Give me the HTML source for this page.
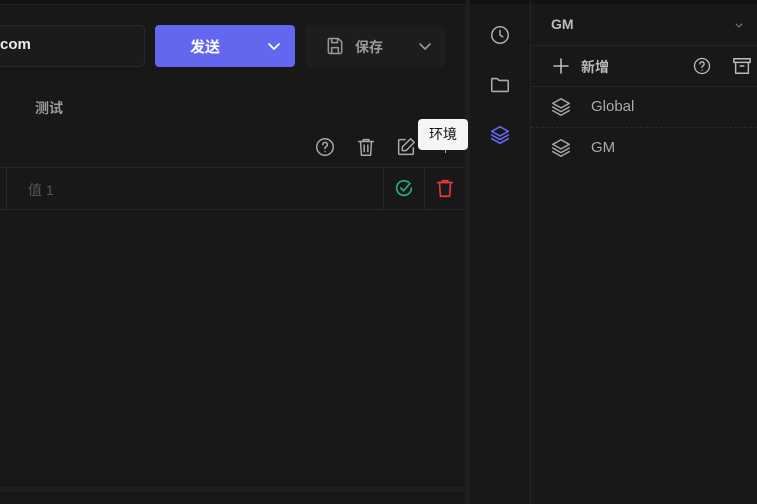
<!DOCTYPE html>
<html><head><meta charset="utf-8"><style>
*{margin:0;padding:0;box-sizing:border-box}
body{width:757px;height:504px;background:#181818;font-family:"Liberation Sans","Noto Sans CJK SC",sans-serif;position:relative;overflow:hidden;color:#ccc}
.a{position:absolute}
svg{position:absolute;fill:none;stroke-linecap:round;stroke-linejoin:round}
</style></head><body>
<div class="a" style="left:0;top:0;width:757px;height:4px;background:#121212"></div>
<div class="a" style="left:0;top:4px;width:465px;height:1px;background:#222"></div>
<!-- divider -->
<div class="a" style="left:465px;top:0;width:5px;height:504px;background:#1e1e1e"></div>
<div class="a" style="left:0;top:487px;width:465px;height:5px;background:#1e1e1e"></div>
<div class="a" style="left:530px;top:0;width:1px;height:504px;background:#262626"></div>
<!-- url input -->
<div class="a" style="left:-10px;top:25px;width:155px;height:42px;border:1px solid #2a2a2a;border-radius:5px;background:#1b1b1b"></div>
<div class="a" style="left:0;top:36px;font-size:15px;font-weight:bold;color:#eee">com</div>
<!-- send -->
<div class="a" style="left:155px;top:25px;width:140px;height:42px;border-radius:4px;background:#6366ee"></div>
<div class="a" style="left:190px;top:36px;font-size:15px;font-weight:bold;color:#fff">发送</div>
<svg style="left:266px;top:38px" width="16" height="16" viewBox="0 0 16 16" stroke="#fff" stroke-width="1.8"><path d="M3 6l5 5 5-5"/></svg>
<!-- save -->
<div class="a" style="left:305px;top:25px;width:140px;height:42px;border-radius:5px;background:#1d1d1d"></div>
<svg style="left:325px;top:36px" width="20" height="20" viewBox="0 0 24 24" stroke="#999" stroke-width="1.8"><path d="M5 3h11l4 4v12a2 2 0 0 1-2 2H6a2 2 0 0 1-2-2V5a2 2 0 0 1 1-2z M8 3v5h7V3 M8 21v-7h8v7"/></svg>
<div class="a" style="left:355px;top:37px;font-size:14px;font-weight:bold;color:#999">保存</div>
<svg style="left:417px;top:38px" width="16" height="16" viewBox="0 0 16 16" stroke="#999" stroke-width="1.6"><path d="M3 6l5 5 5-5"/></svg>
<div class="a" style="left:35px;top:98px;font-size:14px;font-weight:bold;color:#999">测试</div>
<!-- icons row -->
<svg style="left:314px;top:136px" width="22" height="22" viewBox="0 0 24 24" stroke="#aaa" stroke-width="1.6"><circle cx="12" cy="12" r="9"/><path d="M9.5 9.5a2.5 2.5 0 1 1 3.5 2.3c-.7.3-1 .8-1 1.5v.5M12 17h.01"/></svg>
<svg style="left:355px;top:136px" width="22" height="22" viewBox="0 0 24 24" stroke="#aaa" stroke-width="1.6"><path d="M4 6h16M9 6V4h6v2M6 6l1 15h10l1-15M10 10v7M14 10v7"/></svg>
<svg style="left:395px;top:136px" width="22" height="22" viewBox="0 0 24 24" stroke="#aaa" stroke-width="1.6"><path d="M11 4H5a1 1 0 0 0-1 1v14a1 1 0 0 0 1 1h14a1 1 0 0 0 1-1v-6M17 3l4 4-9 9H8v-4z"/></svg>
<div class="a" style="left:445px;top:140px;width:1px;height:13px;background:#aaa"></div>
<div class="a" style="left:418px;top:119px;width:50px;height:31px;background:#f5f5f5;border-radius:4px;color:#111;font-size:14px;line-height:31px;text-align:center;z-index:2">环境</div>
<!-- table row -->
<div class="a" style="left:0;top:167px;width:465px;height:1px;background:#262626"></div>
<div class="a" style="left:0;top:209px;width:465px;height:1px;background:#262626"></div>
<div class="a" style="left:6px;top:168px;width:1px;height:41px;background:#262626"></div>
<div class="a" style="left:383px;top:168px;width:1px;height:41px;background:#262626"></div>
<div class="a" style="left:424px;top:168px;width:1px;height:41px;background:#262626"></div>
<div class="a" style="left:28px;top:180px;font-size:14px;color:#555">值 1</div>
<svg style="left:393px;top:177px" width="22" height="22" viewBox="0 0 24 24" stroke="#22b07d" stroke-width="1.8"><path d="M20 12a8 8 0 1 1-3-6.2M8.5 12l3 3 7-8"/></svg>
<svg style="left:434px;top:177px" width="22" height="22" viewBox="0 0 24 24" stroke="#e5383b" stroke-width="1.8"><path d="M4 6h16M9 6V4h6v2M6 6l1 15h10l1-15"/></svg>
<!-- side icons -->
<svg style="left:489px;top:24px" width="22" height="22" viewBox="0 0 24 24" stroke="#aaa" stroke-width="1.7"><circle cx="12" cy="12" r="9"/><path d="M12 7v5l3 2"/></svg>
<svg style="left:489px;top:74px" width="22" height="22" viewBox="0 0 24 24" stroke="#aaa" stroke-width="1.7"><path d="M3 6a1 1 0 0 1 1-1h5l2 2h9a1 1 0 0 1 1 1v10a1 1 0 0 1-1 1H4a1 1 0 0 1-1-1z"/></svg>
<svg style="left:489px;top:124px" width="22" height="22" viewBox="0 0 24 24" stroke="#6366ee" stroke-width="1.8"><path d="M12 3l9 5-9 5-9-5zM3 12l9 5 9-5M3 16l9 5 9-5"/></svg>
<!-- right panel -->
<div class="a" style="left:551px;top:16px;font-size:14px;font-weight:bold;color:#bbb">GM</div>
<svg style="left:734px;top:20px" width="10" height="10" viewBox="0 0 10 10" stroke="#777" stroke-width="1.2"><path d="M2 4l3 3 3-3"/></svg>
<div class="a" style="left:531px;top:45px;width:226px;height:1px;background:#262626"></div>
<svg style="left:552px;top:57px" width="18" height="18" viewBox="0 0 18 18" stroke="#bbb" stroke-width="1.6"><path d="M9 2v14M2 9h14"/></svg>
<div class="a" style="left:581px;top:57px;font-size:14px;font-weight:bold;color:#bbb">新增</div>
<svg style="left:692px;top:56px" width="20" height="20" viewBox="0 0 24 24" stroke="#bbb" stroke-width="1.6"><circle cx="12" cy="12" r="9"/><path d="M9.5 9.5a2.5 2.5 0 1 1 3.5 2.3c-.7.3-1 .8-1 1.5v.5M12 17h.01"/></svg>
<svg style="left:731px;top:56px" width="22" height="20" viewBox="0 0 24 22" stroke="#bbb" stroke-width="1.6"><path d="M3 3h18v4H3zM5 7v12h14V7M10 11h4"/></svg>
<div class="a" style="left:531px;top:86px;width:226px;height:1px;background:#262626"></div>
<svg style="left:550px;top:96px" width="22" height="22" viewBox="0 0 24 24" stroke="#aaa" stroke-width="1.6"><path d="M12 3l9 5-9 5-9-5zM3 12l9 5 9-5M3 16l9 5 9-5"/></svg>
<div class="a" style="left:591px;top:98px;font-size:15px;color:#aaa">Global</div>
<svg style="left:736px;top:97px" width="10" height="20" viewBox="0 0 10 20" fill="#aaa"><circle cx="5" cy="3" r="1.6"/><circle cx="5" cy="10" r="1.6"/><circle cx="5" cy="17" r="1.6"/></svg>
<div class="a" style="left:531px;top:127px;width:226px;height:0;border-top:1px dashed #2a2a2a"></div>
<svg style="left:550px;top:137px" width="22" height="22" viewBox="0 0 24 24" stroke="#aaa" stroke-width="1.6"><path d="M12 3l9 5-9 5-9-5zM3 12l9 5 9-5M3 16l9 5 9-5"/></svg>
<div class="a" style="left:591px;top:139px;font-size:15px;color:#aaa">GM</div>
<svg style="left:736px;top:138px" width="10" height="20" viewBox="0 0 10 20" fill="#aaa"><circle cx="5" cy="3" r="1.6"/><circle cx="5" cy="10" r="1.6"/><circle cx="5" cy="17" r="1.6"/></svg>
</body></html>
